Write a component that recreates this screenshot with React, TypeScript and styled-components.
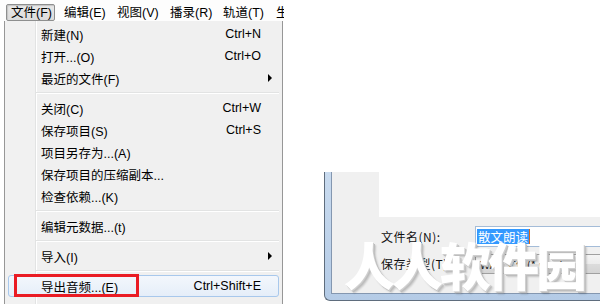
import React from 'react';
import styled, { createGlobalStyle } from 'styled-components';

const GlobalStyle = createGlobalStyle`
  html, body {
    margin: 0;
    padding: 0;
    background: #ffffff;
  }
  body {
    font-family: "Liberation Sans", "Noto Sans CJK SC", sans-serif;
    color: #000;
  }
`;

const Page = styled.div`
  width: 600px;
  height: 304px;
  overflow: hidden;
  display: flex;
  background: #fff;
`;

const LeftPane = styled.section`
  width: 284px;
  flex-shrink: 0;
  display: flex;
  flex-direction: column;
  position: relative;
`;

const MenuBar = styled.nav`
  height: 21px;
  padding: 4px 0 0 6px;
  box-sizing: border-box;
  display: flex;
  overflow: hidden;
  white-space: nowrap;
  background: #fdfdfd;
`;

const BarItem = styled.div<{ $open?: boolean }>`
  flex-shrink: 0;
  width: 49px;
  height: 17px;
  margin-right: 4px;
  box-sizing: border-box;
  font-size: 12.5px;
  line-height: 16px;
  border: 1px solid ${({ $open }) => ($open ? '#8e8f8f' : 'transparent')};
  border-radius: 2px;
  background: ${({ $open }) =>
    $open ? 'linear-gradient(#e8e8e8, #dcdcdc)' : 'transparent'};
  box-shadow: ${({ $open }) => ($open ? 'inset 1px 1px 1px #c4c4c4' : 'none')};
  padding-left: 4px;
`;

const Dropdown = styled.div`
  margin-left: 4px;
  width: 279px;
  flex: 1;
  box-sizing: border-box;
  border-left: 1px solid #979797;
  border-right: 1px solid #979797;
  padding-top: 2px;
  background: linear-gradient(
    to right,
    #f1f1f1 0,
    #f1f1f1 30px,
    #e2e3e3 30px,
    #e2e3e3 31px,
    #ffffff 31px,
    #ffffff 32px,
    #f0f0f0 32px
  );
`;

const Item = styled.div<{ $hot?: boolean }>`
  position: relative;
  height: 22px;
  margin: 0 3px;
  padding-left: 32px;
  box-sizing: border-box;
  display: flex;
  align-items: center;
  font-size: 12.5px;
  border: 1px solid ${({ $hot }) => ($hot ? '#a8c8ec' : 'transparent')};
  border-radius: 3px;
  background: ${({ $hot }) =>
    $hot ? 'linear-gradient(#f3f7fc, #e5eef9)' : 'transparent'};
`;

const Label = styled.span`
  flex: 1;
`;

const Shortcut = styled.span`
  text-align: right;
`;

const ArrowCell = styled.span`
  width: 17px;
  height: 100%;
  display: flex;
  align-items: center;
  padding-left: 7px;
  box-sizing: border-box;
`;

const Arrow = styled.span`
  width: 0;
  height: 0;
  border-top: 4px solid transparent;
  border-bottom: 4px solid transparent;
  border-left: 4px solid #000;
`;

const Separator = styled.div`
  height: 8px;
  margin: 0 3px 0 31px;
  display: flex;
  flex-direction: column;
  justify-content: center;

  &::before {
    content: '';
    height: 1px;
    background: #e2e3e3;
  }
  &::after {
    content: '';
    height: 1px;
    background: #ffffff;
  }
`;

const Callout = styled.span`
  position: absolute;
  left: 5px;
  top: -2px;
  width: 125px;
  height: 23px;
  box-sizing: border-box;
  border: 3px solid #ea1c24;
`;

const RightPane = styled.section`
  flex: 1;
  margin-left: 40px;
  padding-top: 172px;
  position: relative;
`;

const Frame = styled.div`
  height: 129px;
  box-sizing: border-box;
  padding: 0 0 6px 6px;
  background: linear-gradient(#c9dbef, #b4cbe6);
  border-left: 1px solid #5f6d7d;
  border-bottom: 1px solid #5f6d7d;
  border-bottom-left-radius: 6px;
`;

const Inner = styled.div`
  height: 100%;
  box-sizing: border-box;
  border-left: 1px solid #8497b0;
  border-bottom: 1px solid #8497b0;
  background: #f0f0f0;
  display: flex;
  flex-direction: column;
`;

const TopRow = styled.div`
  height: 45px;
  display: flex;
`;

const Strip = styled.div`
  width: 47px;
  background: #f0f0f0;
`;

const WhitePane = styled.div`
  flex: 1;
  background: #ffffff;
`;

const Form = styled.div`
  padding: 9px 0 0 49px;
  display: flex;
  flex-direction: column;
  gap: 6px;
`;

const FieldRow = styled.div`
  display: flex;
  align-items: center;
  height: 21px;
`;

const FieldLabel = styled.span`
  width: 94px;
  font-size: 12px;
  letter-spacing: 0.5px;
  font-family: "Noto Sans CJK SC", "DejaVu Sans", sans-serif;
  color: #111;
`;

const TextBox = styled.div`
  flex: 1;
  height: 21px;
  box-sizing: border-box;
  border: 1px solid #a4bcd8;
  border-right: none;
  background: #fff;
  display: flex;
  align-items: center;
  padding-left: 1px;
`;

const Selected = styled.span`
  font-size: 12.5px;
  line-height: 15px;
  color: #fff;
  background: #3399ff;
  padding: 0 1px;
  font-family: "Noto Sans CJK SC", sans-serif;
  border-right: 1px solid #d8661b;
`;

const SelectBox = styled.div`
  flex: 1;
  height: 20px;
  box-sizing: border-box;
  border: 1px solid #a0a0a0;
  border-right: none;
  border-radius: 2px 0 0 2px;
  background: linear-gradient(#f4f4f4 0, #ececec 50%, #dcdcdc 51%, #d4d4d4 100%);
  font-size: 11px;
  line-height: 18px;
  padding-left: 4px;
  color: #222;
  font-family: "Noto Sans CJK SC", sans-serif;
`;

const Watermark = styled.div`
  position: absolute;
  left: 20px;
  top: 232px;
  font-family: "Noto Sans CJK SC", sans-serif;
  font-weight: 900;
  font-size: 51px;
  letter-spacing: -3px;
  line-height: 64px;
  color: #ffffff;
  white-space: nowrap;
  text-shadow: 1px 1px 0 #cfcfcf, 2px 2px 0 #bdbdbd, 3px 3px 2px rgba(0, 0, 0, 0.18);
`;

type Entry =
  | { kind: 'item'; label: string; shortcut?: string; sub?: boolean; hot?: boolean }
  | { kind: 'sep' };

const entries: Entry[] = [
  { kind: 'item', label: '新建(N)', shortcut: 'Ctrl+N' },
  { kind: 'item', label: '打开...(O)', shortcut: 'Ctrl+O' },
  { kind: 'item', label: '最近的文件(F)', sub: true },
  { kind: 'sep' },
  { kind: 'item', label: '关闭(C)', shortcut: 'Ctrl+W' },
  { kind: 'item', label: '保存项目(S)', shortcut: 'Ctrl+S' },
  { kind: 'item', label: '项目另存为...(A)' },
  { kind: 'item', label: '保存项目的压缩副本...' },
  { kind: 'item', label: '检查依赖...(K)' },
  { kind: 'sep' },
  { kind: 'item', label: '编辑元数据...(t)' },
  { kind: 'sep' },
  { kind: 'item', label: '导入(I)', sub: true },
  { kind: 'sep' },
  { kind: 'item', label: '导出音频...(E)', shortcut: 'Ctrl+Shift+E', hot: true },
];

const barItems = ['文件(F)', '编辑(E)', '视图(V)', '播录(R)', '轨道(T)', '生成(G)'];

const App = () => {
  return (
    <>
      <GlobalStyle />
      <Page>
        <LeftPane>
          <MenuBar>
            {barItems.map((name, i) => (
              <BarItem key={name} $open={i === 0}>
                {name}
              </BarItem>
            ))}
          </MenuBar>
          <Dropdown>
            {entries.map((e, i) =>
              e.kind === 'sep' ? (
                <Separator key={i} />
              ) : (
                <Item key={i} $hot={e.hot}>
                  {e.hot && <Callout />}
                  <Label>{e.label}</Label>
                  {e.shortcut && <Shortcut>{e.shortcut}</Shortcut>}
                  <ArrowCell>{e.sub && <Arrow />}</ArrowCell>
                </Item>
              )
            )}
          </Dropdown>
        </LeftPane>
        <RightPane>
          <Frame>
            <Inner>
              <TopRow>
                <Strip />
                <WhitePane />
              </TopRow>
              <Form>
                <FieldRow>
                  <FieldLabel>文件名(N):</FieldLabel>
                  <TextBox>
                    <Selected>散文朗读</Selected>
                  </TextBox>
                </FieldRow>
                <FieldRow>
                  <FieldLabel>保存类型(T):</FieldLabel>
                  <SelectBox>WAV 文件(*.wav)</SelectBox>
                </FieldRow>
              </Form>
            </Inner>
          </Frame>
          <Watermark>人人软件园</Watermark>
        </RightPane>
      </Page>
    </>
  );
};

export default App;
